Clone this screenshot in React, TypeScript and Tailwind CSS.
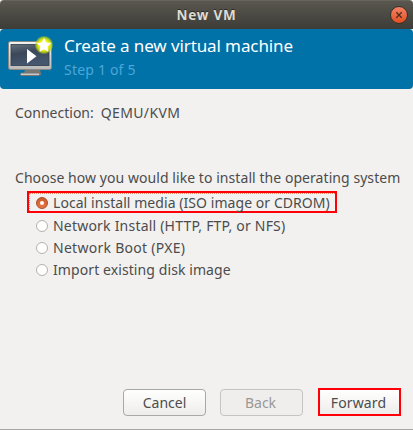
import type { ReactNode } from "react";

function MonitorIcon() {
  return (
    <svg width="48" height="48" viewBox="0 0 48 48" className="block">
      <defs>
        <linearGradient id="frame" x1="0" y1="0" x2="0" y2="1">
          <stop offset="0" stopColor="#f4f4f2" />
          <stop offset="1" stopColor="#b9b9b7" />
        </linearGradient>
        <linearGradient id="screen" x1="0" y1="0" x2="0.3" y2="1">
          <stop offset="0" stopColor="#66717c" />
          <stop offset="0.45" stopColor="#3b485a" />
          <stop offset="1" stopColor="#46566e" />
        </linearGradient>
        <radialGradient id="glow">
          <stop offset="0" stopColor="#fdfd60" />
          <stop offset="0.6" stopColor="#e2e80c" />
          <stop offset="0.8" stopColor="#c8d80c" stopOpacity="0.75" />
          <stop offset="1" stopColor="#a0c020" stopOpacity="0" />
        </radialGradient>
      </defs>
      <path d="M20 35h15l1.5 5h-18z" fill="#777775" />
      <rect x="15.5" y="38" width="19" height="2.500" rx="1" fill="#c9c9c7" stroke="#777775" />
      <rect x="3.5" y="6.500" width="43" height="28" rx="2" fill="url(#frame)" stroke="#8b8987" />
      <rect x="6" y="9.500" width="38" height="21" fill="url(#screen)" stroke="#303c4b" strokeWidth="0.8" />
      <path d="M22 14v14.500l9.500-7.200z" fill="#fff" />
      <circle cx="39" cy="10" r="9.5" fill="url(#glow)" />
      <path
        d="M39 3.600l2 4.200 4.600.6-3.400 3.200.9 4.600-4.100-2.300-4.100 2.300.9-4.600-3.400-3.200 4.600-.6z"
        fill="#fff"
        stroke="#fff"
        strokeWidth="0.8"
        strokeLinejoin="round"
      />
    </svg>
  );
}

function Radio({ checked = false }: { checked?: boolean }) {
  return checked ? (
    <span className="flex size-3 shrink-0 items-center justify-center rounded-full border border-[#ab4b24] bg-linear-to-b from-[#cb5c2f] to-[#ed7442]">
      <span className="size-1 rounded-full bg-white" />
    </span>
  ) : (
    <span className="size-3 shrink-0 rounded-full border border-[#b3b0ad] bg-white" />
  );
}

function Option({ children }: { children: ReactNode }) {
  return (
    <div className="flex h-[22px] items-center gap-[5px] pl-9">
      <Radio />
      {children}
    </div>
  );
}

export default function App() {
  return (
    <div className="flex h-[430px] w-[413px] flex-col overflow-hidden border-b border-[#a5a4a2] bg-[#f2f1f0] font-['Noto_Sans',sans-serif] text-[14px] leading-5 whitespace-nowrap text-[#4c4c4c]">
      <header className="grid h-[29px] shrink-0 grid-cols-[1fr_auto_1fr] items-center rounded-t-[4px] border-t border-[#66645b] bg-linear-to-b from-[#59574f] to-[#3d3c37] pb-px">
        <span />
        <h1 className="text-[13.500px] font-bold tracking-[0.8px] text-[#dfdbd2] [text-shadow:0_-1px_#2b2a27]">New VM</h1>
        <span className="mr-[5px] flex size-[18px] items-center justify-center justify-self-end rounded-full border border-[#34322e] bg-linear-to-b from-[#f58263] to-[#e34e1b]">
          <svg width="8" height="8" viewBox="0 0 8 8">
            <path d="M1.300 1.300l5.400 5.400M6.700 1.300L1.300 6.700" stroke="#4e2d1d" strokeWidth="1.300" />
          </svg>
        </span>
      </header>

      <div className="shrink-0 bg-[#f2f1f0]">
        <section className="flex h-[60px] rounded-[4px] bg-[#0072a8] pt-[6px] pl-[5px]">
          <MonitorIcon />
          <div className="pl-[11px]">
            <h2 className="text-[17px] leading-[22px] tracking-[-0.1px] text-white">Create a new virtual machine</h2>
            <p className="pt-[3px] text-[14px] leading-5 tracking-[0.2px] text-[#4da6d8]">Step 1 of 5</p>
          </div>
        </section>
      </div>

      <main className="flex grow flex-col pt-[14px]">
        <p className="flex h-5 gap-[7px] pl-[15px]">
          <span>Connection:</span>
          <span className="tracking-[0.35px]">QEMU/KVM</span>
        </p>
        <p className="mt-[45px] h-5 pl-[15px] tracking-[0.06px]">Choose how you would like to install the operating system</p>
        <div className="mt-[3px] ml-[27px] flex h-[22px] w-[310px] border-2 border-[#ff0009]">
          <div className="flex grow items-center gap-[5px] border-t border-l border-dotted border-[#e58b68] pt-px pl-[6px]">
            <Radio checked />
            <span className="tracking-[0.06px]">Local install media (ISO image or CDROM)</span>
          </div>
        </div>
        <div className="mt-[2px]">
          <Option><span className="tracking-[0.21px]">Network Install (HTTP, FTP, or NFS)</span></Option>
          <Option><span className="tracking-[0.28px]">Network Boot (PXE)</span></Option>
          <Option><span className="tracking-[0.09px]">Import existing disk image</span></Option>
        </div>
      </main>

      <footer className="flex h-[41px] shrink-0 items-start justify-end pr-3">
        <button className="mt-px mr-[14px] h-[27px] w-[83px] rounded-[4px] border border-[#aaa8a5] bg-linear-to-b from-white to-[#eeedeb]">Cancel</button>
        <button disabled className="mt-px mr-[15px] h-[27px] w-[83px] rounded-[4px] border border-[#c6c4c1] bg-[#efeeed] pr-[2px] text-[#9a9895]">Back</button>
        <button className="h-7 w-[83px] border-2 border-[#ff0009] bg-linear-to-b from-white to-[#eeedeb] pt-[2px] pr-[2px] tracking-[0.15px]">Forward</button>
      </footer>
    </div>
  );
}
